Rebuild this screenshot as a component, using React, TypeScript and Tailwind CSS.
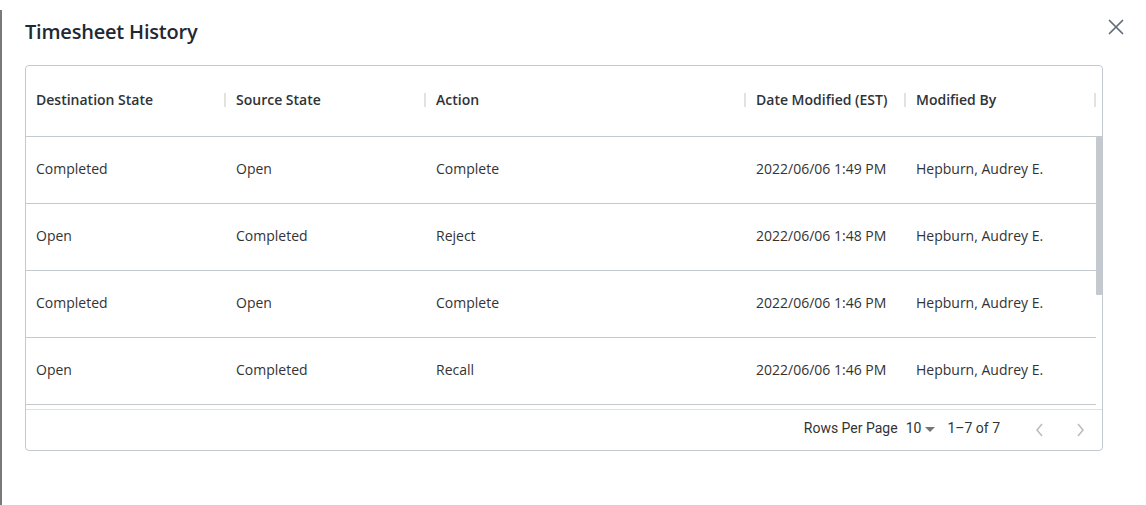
import React from "react";

const cols = [
  { key: "dest", label: "Destination State", w: "w-[200px]" },
  { key: "src", label: "Source State", w: "w-[200px]" },
  { key: "action", label: "Action", w: "w-[320px]" },
  { key: "date", label: "Date Modified (EST)", w: "w-[160px]" },
  { key: "by", label: "Modified By", w: "w-[190px]" },
];

const rows = [
  ["Completed", "Open", "Complete", "2022/06/06 1:49 PM", "Hepburn, Audrey E."],
  ["Open", "Completed", "Reject", "2022/06/06 1:48 PM", "Hepburn, Audrey E."],
  ["Completed", "Open", "Complete", "2022/06/06 1:46 PM", "Hepburn, Audrey E."],
  ["Open", "Completed", "Recall", "2022/06/06 1:46 PM", "Hepburn, Audrey E."],
  ["Open", "Open", "Reopen", "2022/06/06 1:40 PM", "Hepburn, Audrey E."],
  ["Open", "Completed", "Recall", "2022/06/06 1:38 PM", "Hepburn, Audrey E."],
  ["Completed", "Open", "Complete", "2022/06/06 1:35 PM", "Hepburn, Audrey E."],
];

export default function App() {
  return (
    <div className="flex h-[505px] w-[1146px] bg-white overflow-hidden" style={{ fontFamily: '"Open Sans", sans-serif' }}>
      <div className="w-[2px] mt-[10px] bg-[#7a7a7a]" />
      <div className="flex flex-col pl-[23px]">
        <div className="flex items-start justify-between w-[1099px] mt-[18px] h-[28px]">
          <h1 className="text-[20px] leading-[28px] font-semibold text-[#1f2933] tracking-[-0.2px]">Timesheet History</h1>
          <button className="mt-[1px] text-[#5f6b7a]">
            <svg width="16" height="16" viewBox="0 0 16 16" fill="none" stroke="currentColor" strokeWidth="1.7" strokeLinecap="round">
              <path d="M1.5 1.5 L14.5 14.5 M14.5 1.5 L1.5 14.5" />
            </svg>
          </button>
        </div>
        <div className="mt-[19px] w-[1078px] border border-[#c4c9d0] rounded-[4px] flex flex-col">
          <div className="flex h-[71px] border-b border-[#c4c9d0] pr-[6px] pb-[4px]">
            {cols.map((c) => (
              <div key={c.key} className={`${c.w} flex items-center justify-between pl-[10px]`}>
                <span className="text-[14px] font-semibold text-[#2f3337]">{c.label}</span>
                <span className="w-[2px] h-[14px] mt-[2px] bg-[#e2e2e2]" />
              </div>
            ))}
          </div>
          <div className="relative h-[272px] overflow-hidden">
            {rows.map((r, i) => (
              <div key={i} className="flex h-[67px] w-[1070px] border-b border-[#c4c9d0] items-center pb-[4px]">
                {r.map((v, j) => (
                  <div key={j} className={`${cols[j].w} pl-[10px] text-[14px] text-[#333333]`}>
                    {v}
                  </div>
                ))}
              </div>
            ))}
            <div className="absolute right-0 top-0 w-[6px] h-[158px] bg-[#c4c9d0] rounded-[1px]" />
          </div>
          <div className="flex items-center justify-end h-[41px] border-t border-[#e0e0e0] text-[14px] text-[#333333] pb-[4px]" style={{ fontFamily: "Roboto, sans-serif" }}>
            <span>Rows Per Page</span>
            <span className="ml-[8px]">10</span>
            <svg className="ml-[4px] mt-[2px]" width="10" height="5" viewBox="0 0 10 5">
              <path d="M0 0 L10 0 L5 5 Z" fill="#757575" />
            </svg>
            <span className="ml-[12px]">1–7 of 7</span>
            <svg className="ml-[34px] mt-[4px]" width="10" height="16" viewBox="0 0 10 16" fill="none" stroke="#bdbdbd" strokeWidth="1.6">
              <path d="M8 2 L3 8 L8 14" />
            </svg>
            <svg className="ml-[32px] mr-[16px] mt-[4px]" width="10" height="16" viewBox="0 0 10 16" fill="none" stroke="#bdbdbd" strokeWidth="1.6">
              <path d="M2 2 L7 8 L2 14" />
            </svg>
          </div>
        </div>
      </div>
    </div>
  );
}
